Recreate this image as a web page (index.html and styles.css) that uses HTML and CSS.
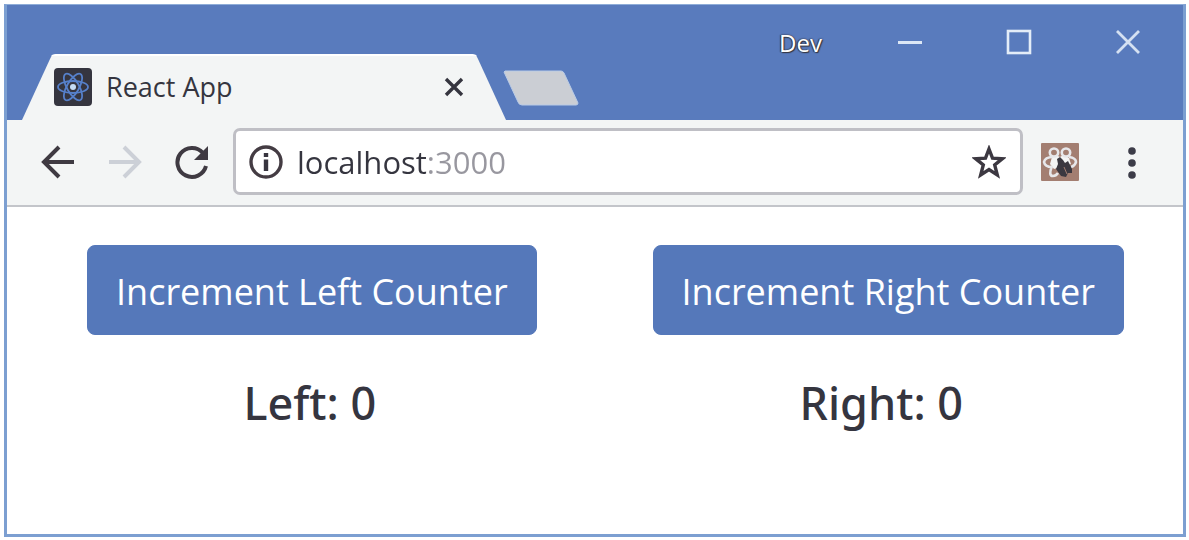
FILE: index.html
```html
<!DOCTYPE html>
<html lang="en">
<head>
<meta charset="utf-8">
<meta name="viewport" content="width=device-width, initial-scale=1">
<title>React App</title>
<link rel="stylesheet" href="styles.css">
</head>
<body>
<div class="window">
  <header class="titlebar">
    <div class="tab">
      <svg class="favicon" viewBox="0 0 38 38" aria-hidden="true">
        <rect width="38" height="38" rx="4" fill="#35353f"/>
        <g fill="none" stroke="#5680ca" stroke-width="1.8">
          <ellipse cx="19" cy="19" rx="15" ry="6"/>
          <ellipse cx="19" cy="19" rx="15" ry="6" transform="rotate(60 19 19)"/>
          <ellipse cx="19" cy="19" rx="15" ry="6" transform="rotate(120 19 19)"/>
        </g>
        <circle cx="19" cy="19" r="3" fill="#c5dcf5"/>
      </svg>
      <span class="tab-title">React App</span>
      <button class="icon-button tab-close" type="button" aria-label="Close tab">
        <svg width="20" height="20" viewBox="0 0 20 20"><path d="M2 2 18 18M18 2 2 18" stroke="#35353f" stroke-width="3.4" fill="none"/></svg>
      </button>
    </div>
    <button class="icon-button new-tab" type="button" aria-label="New tab">
      <svg width="76" height="36" viewBox="0 0 76 36"><path d="M2 1H58Q60 1 61 3L75 33Q75 35 73 35H19Q16 35 15 32L1 2Z" fill="#cbced4" stroke="#b9cbe6"/></svg>
    </button>
    <div class="window-controls">
      <span class="profile">Dev</span>
      <button class="icon-button" type="button" aria-label="Minimize">
        <svg width="26" height="26" viewBox="0 0 26 26"><path d="M1 13.5H25" stroke="#dce7f5" stroke-width="3"/></svg>
      </button>
      <button class="icon-button" type="button" aria-label="Maximize">
        <svg width="26" height="26" viewBox="0 0 26 26"><rect x="2" y="2" width="22" height="22" fill="none" stroke="#e4edf8" stroke-width="2.6"/></svg>
      </button>
      <button class="icon-button" type="button" aria-label="Close">
        <svg width="26" height="26" viewBox="0 0 26 26"><path d="M2 2 24 24M24 2 2 24" stroke="#d5e1f2" stroke-width="2.8"/></svg>
      </button>
    </div>
  </header>
  <nav class="toolbar" aria-label="Browser">
    <div class="nav-buttons">
      <button class="icon-button" type="button" aria-label="Back">
        <svg width="34" height="34" viewBox="0 0 34 34"><path d="M33 17H3M18 2 3 17 18 32" fill="none" stroke="#3f3a42" stroke-width="4"/></svg>
      </button>
      <button class="icon-button" type="button" aria-label="Forward">
        <svg width="34" height="34" viewBox="0 0 34 34"><path d="M1 17H31M16 2 31 17 16 32" fill="none" stroke="#ccd0d7" stroke-width="4"/></svg>
      </button>
      <button class="icon-button" type="button" aria-label="Reload">
        <svg width="34" height="34" viewBox="0 0 34 34"><path d="M31 21A14.5 14.5 0 1 1 28 8" fill="none" stroke="#3f3a42" stroke-width="4"/><path d="M33 1V15H19Z" fill="#3f3a42"/></svg>
      </button>
    </div>
    <div class="address">
      <svg width="34" height="34" viewBox="0 0 34 34" aria-hidden="true"><circle cx="17" cy="17" r="15" fill="none" stroke="#443c43" stroke-width="3.4"/><path d="M17 14.5V26M17 8V12" stroke="#38353f" stroke-width="4.4"/></svg>
      <input class="url" type="text" value="localhost:3000" aria-label="Address" spellcheck="false">
      <button class="icon-button" type="button" aria-label="Bookmark this page">
        <svg width="34" height="34" viewBox="0 0 34 34"><path d="M17 4 20.5 13.2 30.5 13.7 22.7 19.9 25.3 30 17 24.6 8.7 30 11.3 19.9 3.5 13.7 13.5 13.2Z" fill="#fff" stroke="#3c3841" stroke-width="3.4"/></svg>
      </button>
    </div>
    <button class="icon-button" type="button" aria-label="React developer tools">
      <svg width="38" height="38" viewBox="0 0 38 38">
        <rect width="38" height="38" rx="1" fill="#a37e71"/>
        <path d="M11 14Q15 11 19 14Q23 11 28 15L30 21 13 26 9 21Z" fill="#f4f4f4"/>
        <g fill="none" stroke="#e7e7ea" stroke-width="2.6">
          <ellipse cx="13" cy="9.5" rx="4.2" ry="4"/><ellipse cx="25" cy="9.5" rx="4.2" ry="4"/>
          <path d="M12 14Q4 14 3 19 4 24 11 24M28 14Q35 15 35 19 34 23 30 24M11 23Q7 33 12 33 15 33 17 30"/>
        </g>
        <path d="M16 16 19 14 22 17 24 20 27 18 31 26 31 30 27 30 25 34 20 33 15 26 17 21Z" fill="#3b3840"/>
        <path d="M23 24 26 31" stroke="#a37e71" stroke-width="1"/>
      </svg>
    </button>
    <button class="icon-button" type="button" aria-label="Menu">
      <svg width="10" height="34" viewBox="0 0 10 34" fill="#3c3c48"><circle cx="5" cy="6" r="3.8"/><circle cx="5" cy="18" r="3.8"/><circle cx="5" cy="30" r="3.8"/></svg>
    </button>
  </nav>
  <main class="page">
    <section class="counter">
      <button class="increment" type="button">Increment Left Counter</button>
      <output class="count">Left: 0</output>
    </section>
    <section class="counter counter-right">
      <button class="increment" type="button">Increment Right Counter</button>
      <output class="count">Right: 0</output>
    </section>
  </main>
</div>
</body>
</html>
```
FILE: styles.css
```css
* { box-sizing: border-box; }

body {
  margin: 0;
  padding: 4px 3px 3px 4px;
  min-height: 100vh;
  display: flex;
  background: #fff;
  color: #35353f;
  font-family: "Open Sans", "Noto Sans", sans-serif;
}

button, input { font: inherit; color: inherit; }

svg { display: block; flex: none; }

.window {
  flex: 1;
  min-width: 0;
  display: flex;
  flex-direction: column;
  border: 3px solid #7c9fd1;
  border-top: 1px solid #8fadd8;
  background: #fff;
}

.titlebar {
  display: flex;
  align-items: flex-end;
  height: 115px;
  padding-left: 15px;
  background: #597bbd;
}

.tab {
  display: flex;
  align-items: center;
  width: 484px;
  height: 66px;
  padding: 0 42px 3px 32px;
  background: #f3f5f5;
  border-top: 2px solid #fff;
  clip-path: polygon(0 100%, 28px 5px, 30px 1px, 34px 0, 450px 0, 454px 1px, 456px 5px, 100% 100%);
}

.favicon { width: 38px; height: 38px; }

.tab-title {
  flex: 1;
  padding-left: 14px;
  font-size: 27px;
}

.icon-button {
  padding: 0;
  border: 0;
  background: none;
}

.new-tab { padding-bottom: 14px; margin-left: -3px; }

.window-controls {
  align-self: flex-start;
  display: flex;
  align-items: center;
  gap: 83px;
  margin-left: auto;
  padding: 18px 42px 0 0;
}

.profile {
  margin-right: -8px;
  padding-top: 2px;
  color: #fff;
  font-size: 24px;
  line-height: 36px;
  text-shadow: 1px 1px 1px #35353f, -1px 0 1px #35353f, 0 0 2px #35353f;
}

.toolbar {
  display: flex;
  align-items: center;
  height: 87px;
  padding: 0 46px 2px 34px;
  border-bottom: 2px solid #c3c5ca;
  background: #f3f5f5;
}

.nav-buttons {
  display: flex;
  gap: 33px;
  margin-right: 24px;
}

.address {
  flex: 1;
  min-width: 0;
  display: flex;
  align-items: center;
  height: 67px;
  margin-right: 18px;
  padding: 0 14px 0 13px;
  border: 3px solid #bfbfc5;
  border-radius: 7px;
  background: #fff;
}

.url {
  flex: 1;
  min-width: 0;
  height: 56px;
  margin-left: 14px;
  padding: 0;
  border: 0;
  outline: 0;
  font-size: 31px;
  background: linear-gradient(to right, #35353f 130px, #98979f 130px) text;
  -webkit-text-fill-color: transparent;
}

.toolbar > .icon-button + .icon-button { margin-left: 48px; }

.page {
  flex: 1;
  display: flex;
  justify-content: space-between;
  align-items: flex-start;
  padding: 38px 59px 40px 80px;
}

.counter {
  display: flex;
  flex-direction: column;
  align-items: center;
  gap: 36px;
}

.increment {
  padding: 20px 28px 16px;
  border: 1px solid #5578ba;
  border-radius: 8px;
  background: #5578ba;
  color: #fff;
  font-size: 36px;
  line-height: 52px;
}

.count {
  padding-right: 4px;
  font-family: "Noto Sans", "Open Sans", sans-serif;
  font-size: 45px;
  font-weight: 500;
  line-height: 64px;
}

.counter-right .count { padding-right: 14px; }
```
